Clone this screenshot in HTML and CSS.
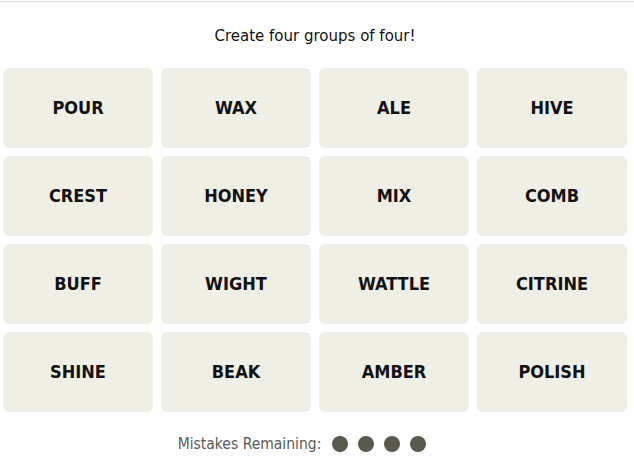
FILE: index.html
```html
<!DOCTYPE html>
<html>

<head>
    <meta charset="UTF-8">
    <title>Connections</title>
    <link rel="stylesheet" href="styles.css">
</head>

<body>
    <div class="game">
        <p class="prompt">Create four groups of four!</p>
        <div class="board">
            <button class="tile">POUR</button>
            <button class="tile">WAX</button>
            <button class="tile">ALE</button>
            <button class="tile">HIVE</button>
            <button class="tile">CREST</button>
            <button class="tile">HONEY</button>
            <button class="tile">MIX</button>
            <button class="tile">COMB</button>
            <button class="tile">BUFF</button>
            <button class="tile">WIGHT</button>
            <button class="tile">WATTLE</button>
            <button class="tile">CITRINE</button>
            <button class="tile">SHINE</button>
            <button class="tile">BEAK</button>
            <button class="tile">AMBER</button>
            <button class="tile">POLISH</button>
        </div>
        <div class="mistakes">
            <span class="mistakes-label">Mistakes Remaining:</span>
            <span class="dots">
                <span class="dot"></span>
                <span class="dot"></span>
                <span class="dot"></span>
                <span class="dot"></span>
            </span>
        </div>
    </div>
</body>

</html>
```

FILE: styles.css
```css
body {
    margin: 0;
    padding-top: 1px;
    background-color: #ffffff;
    font-family: "DejaVu Sans Condensed", sans-serif;
}

.game {
    border-top: 1px solid #dedede;
    padding: 0 7px 0 3px;
}

.prompt {
    margin: 0;
    height: 66px;
    line-height: 66px;
    text-align: center;
    font-size: 16.7px;
    color: #121212;
}

.board {
    display: grid;
    grid-template-columns: repeat(4, 150px);
    grid-auto-rows: 80px;
    gap: 8px;
}

.tile {
    margin: 0;
    padding: 0 0 2px 0;
    border: none;
    border-radius: 6px;
    background-color: #efefe6;
    font-family: "DejaVu Sans Condensed", sans-serif;
    font-weight: bold;
    font-size: 18px;
    color: #121212;
    cursor: pointer;
}

.mistakes {
    display: flex;
    justify-content: center;
    align-items: center;
    height: 62px;
    padding-right: 26px;
    padding-top: 1px;
    color: #5a5a5a;
    font-size: 15.5px;
}

.dots {
    display: flex;
    gap: 10px;
    margin-left: 11px;
}

.dot {
    width: 16px;
    height: 16px;
    border-radius: 50%;
    background-color: #5a594e;
}
```
